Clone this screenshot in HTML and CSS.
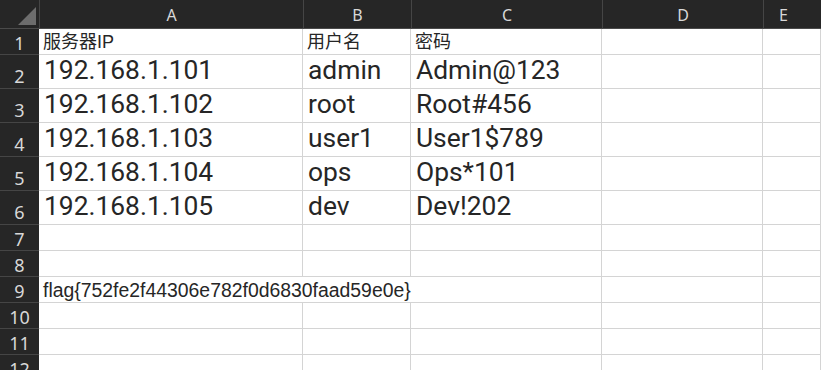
FILE: index.html
```html
<!DOCTYPE html>
<html lang="zh-CN">
<head>
<meta charset="UTF-8">
<title>服务器密码</title>
<link rel="stylesheet" href="styles.css">
</head>
<body>

<div class="sheet">
    <div class="corner"><div class="corner-tri"></div></div>
    <div class="col-head">A</div>
    <div class="col-head">B</div>
    <div class="col-head">C</div>
    <div class="col-head">D</div>
    <div class="col-head col-last">E</div>

    <div class="row-head">1</div>
    <div class="cell cjk">服务器IP</div>
    <div class="cell cjk">用户名</div>
    <div class="cell cjk">密码</div>
    <div class="cell"></div>
    <div class="cell"></div>

    <div class="row-head tall">2</div>
    <div class="cell big">192.168.1.101</div>
    <div class="cell big">admin</div>
    <div class="cell big">Admin@123</div>
    <div class="cell"></div>
    <div class="cell"></div>

    <div class="row-head tall">3</div>
    <div class="cell big">192.168.1.102</div>
    <div class="cell big">root</div>
    <div class="cell big">Root#456</div>
    <div class="cell"></div>
    <div class="cell"></div>

    <div class="row-head tall">4</div>
    <div class="cell big">192.168.1.103</div>
    <div class="cell big">user1</div>
    <div class="cell big">User1$789</div>
    <div class="cell"></div>
    <div class="cell"></div>

    <div class="row-head tall">5</div>
    <div class="cell big">192.168.1.104</div>
    <div class="cell big">ops</div>
    <div class="cell big">Ops*101</div>
    <div class="cell"></div>
    <div class="cell"></div>

    <div class="row-head tall">6</div>
    <div class="cell big">192.168.1.105</div>
    <div class="cell big">dev</div>
    <div class="cell big">Dev!202</div>
    <div class="cell"></div>
    <div class="cell"></div>

    <div class="row-head">7</div>
    <div class="cell"></div><div class="cell"></div><div class="cell"></div><div class="cell"></div><div class="cell"></div>

    <div class="row-head">8</div>
    <div class="cell"></div><div class="cell"></div><div class="cell"></div><div class="cell"></div><div class="cell"></div>

    <div class="row-head">9</div>
    <div class="cell flag">flag{752fe2f44306e782f0d6830faad59e0e}</div>
    <div class="cell"></div><div class="cell"></div>

    <div class="row-head">10</div>
    <div class="cell"></div><div class="cell"></div><div class="cell"></div><div class="cell"></div><div class="cell"></div>

    <div class="row-head">11</div>
    <div class="cell"></div><div class="cell"></div><div class="cell"></div><div class="cell"></div><div class="cell"></div>

    <div class="row-head">12</div>
    <div class="cell"></div><div class="cell"></div><div class="cell"></div><div class="cell"></div><div class="cell"></div>
</div>

</body>
</html>
```

FILE: styles.css
```css
body {
    margin: 0;
    padding: 0;
    background: #ffffff;
    overflow: hidden;
}
.sheet {
    display: grid;
    grid-template-columns: 39px 264px 108px 191px 161px 58px;
    grid-template-rows: 29px 26px 34px 34px 34px 34px 34px 26px 26px 26px 26px 26px 26px;
    width: 821px;
    height: 370px;
    overflow: hidden;
}
.corner {
    background-color: #262626;
    border-bottom: 1px solid #4a4a4a;
    box-sizing: border-box;
    position: relative;
}
.corner-tri {
    position: absolute;
    right: 3px;
    bottom: 3px;
    width: 0;
    height: 0;
    border-left: 18px solid transparent;
    border-bottom: 18px solid #6d6d6d;
}
.col-head {
    background-color: #262626;
    color: #d8d8d8;
    font-family: "Noto Sans", sans-serif;
    font-size: 16px;
    border-left: 1px solid #454545;
    border-bottom: 1px solid #4a4a4a;
    box-sizing: border-box;
    display: flex;
    align-items: flex-end;
    justify-content: center;
    padding-bottom: 2px;
}
.col-last {
    padding-right: 18px;
}
.row-head {
    background-color: #262626;
    color: #d8d8d8;
    font-family: "Noto Sans", sans-serif;
    font-size: 18px;
    border-bottom: 1px solid #454545;
    box-sizing: border-box;
    display: flex;
    align-items: flex-end;
    justify-content: center;
    line-height: 1;
    padding-bottom: 2px;
}
.row-head.tall {
    padding-bottom: 3px;
}
.cell {
    border-right: 1px solid #d4d4d4;
    border-bottom: 1px solid #d4d4d4;
    box-sizing: border-box;
    color: #262626;
    font-family: Roboto, "Noto Sans CJK SC", sans-serif;
    display: flex;
    align-items: flex-end;
    padding-left: 4px;
    white-space: nowrap;
    line-height: 1;
}
.cjk {
    font-size: 18px;
    font-family: "Liberation Sans", "Noto Sans CJK SC", sans-serif;
    padding-bottom: 3px;
    padding-left: 4px;
}
.big {
    font-size: 26.4px;
    padding-bottom: 5px;
    padding-left: 5px;
}
.flag {
    grid-column: span 3;
    font-family: "Liberation Sans", sans-serif;
    font-size: 19.4px;
    padding-bottom: 2px;
}
```
